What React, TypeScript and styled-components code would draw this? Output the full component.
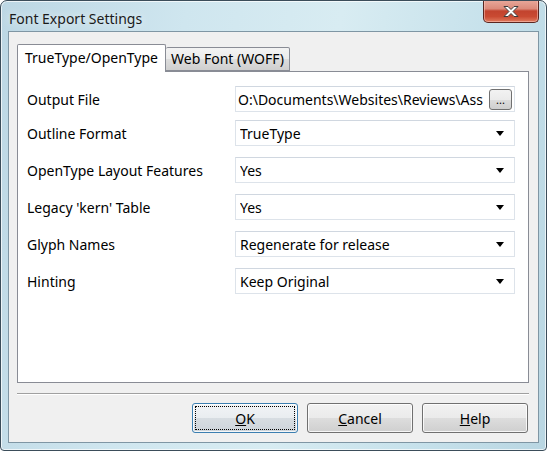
import React from 'react';
import styled, { createGlobalStyle } from 'styled-components';

const GlobalStyle = createGlobalStyle`
  html, body {
    margin: 0;
    padding: 0;
    background: #ffffff;
  }
  body {
    font-family: 'Noto Sans', 'Open Sans', sans-serif;
    font-size: 14px;
    color: #000;
  }
`;

interface Row {
  label: string;
  value: string;
  browse?: boolean;
}

const rows: Row[] = [
  { label: 'Output File', value: 'O:\\Documents\\Websites\\Reviews\\Ass', browse: true },
  { label: 'Outline Format', value: 'TrueType' },
  { label: 'OpenType Layout Features', value: 'Yes' },
  { label: "Legacy 'kern' Table", value: 'Yes' },
  { label: 'Glyph Names', value: 'Regenerate for release' },
  { label: 'Hinting', value: 'Keep Original' },
];

const App: React.FC = () => {
  return (
    <>
      <GlobalStyle />
      <Window>
        <TitleBar>
          <Title>Font Export Settings</Title>
          <CloseButton aria-label="Close">
            <svg width="20" height="13" viewBox="0 0 20 13">
              <path
                d="M3 1.5h4l3 3 3-3h4l-5 5 5 5h-4l-3-3-3 3H3l5-5z"
                fill="#ffffff"
                stroke="#3d3d3d"
                strokeWidth="1"
                strokeLinejoin="round"
              />
            </svg>
          </CloseButton>
        </TitleBar>
        <Client>
          <Tabs>
            <TabStrip>
              <Tab $active>TrueType/OpenType</Tab>
              <Tab>Web Font (WOFF)</Tab>
            </TabStrip>
            <Panel>
              {rows.map((row, i) => (
                <FieldRow key={row.label} $tight={i === 0}>
                  <Label>{row.label}</Label>
                  {row.browse ? (
                    <TextBox>
                      <FieldText>{row.value}</FieldText>
                      <BrowseButton>...</BrowseButton>
                    </TextBox>
                  ) : (
                    <Combo>
                      <FieldText>{row.value}</FieldText>
                      <Arrow />
                    </Combo>
                  )}
                </FieldRow>
              ))}
            </Panel>
          </Tabs>
          <Separator />
          <ButtonBar>
            <Button $default>
              <u>O</u>K
            </Button>
            <Button>
              <u>C</u>ancel
            </Button>
            <Button>
              <u>H</u>elp
            </Button>
          </ButtonBar>
        </Client>
      </Window>
    </>
  );
};

export default App;

const Window = styled.div`
  width: 547px;
  height: 451px;
  box-sizing: border-box;
  border: 1px solid #3b4d5a;
  border-radius: 7px 7px 4px 4px;
  background: linear-gradient(100deg, #bcd7e4 0%, #cfe6ef 30%, #d8ecf2 55%, #c6e1eb 80%, #b9d6e2 100%);
  box-shadow: inset 0 0 0 1px rgba(255, 255, 255, 0.7);
  padding: 0 7px 7px 7px;
  display: flex;
  flex-direction: column;
  overflow: hidden;
`;

const TitleBar = styled.div`
  height: 30px;
  display: flex;
  align-items: flex-start;
  justify-content: space-between;
`;

const Title = styled.div`
  font-size: 14px;
  color: #1a1a1a;
  padding: 8px 0 0 1px;
  text-shadow: 0 0 8px rgba(255, 255, 255, 0.9);
`;

const CloseButton = styled.div`
  width: 56px;
  height: 23px;
  margin-top: -1px;
  box-sizing: border-box;
  border: 1px solid #5a2620;
  border-top: none;
  border-radius: 0 0 5px 5px;
  background: linear-gradient(
    to bottom,
    #e9a99c 0%,
    #dc8a7a 40%,
    #c2432e 50%,
    #c94a32 75%,
    #e07b5e 100%
  );
  box-shadow: inset 0 0 0 1px rgba(255, 210, 200, 0.5);
  display: flex;
  align-items: center;
  justify-content: center;
`;

const Client = styled.div`
  flex: 1;
  box-sizing: border-box;
  border: 1px solid #7f96a4;
  background: #f0f0f0;
  padding: 12px 9px 0 8px;
  display: flex;
  flex-direction: column;
`;

const Tabs = styled.div`
  display: flex;
  flex-direction: column;
`;

const TabStrip = styled.div`
  display: flex;
  align-items: flex-end;
  height: 27px;
  position: relative;
  z-index: 1;
`;

const Tab = styled.div<{ $active?: boolean }>`
  box-sizing: border-box;
  height: ${(p) => (p.$active ? '28px' : '24px')};
  margin-bottom: ${(p) => (p.$active ? '-1px' : '0')};
  padding: ${(p) => (p.$active ? '3px 7px 0 7px' : '1px 5px 0 5px')};
  border: 1px solid #898c95;
  border-bottom: ${(p) => (p.$active ? 'none' : '1px solid #898c95')};
  border-left: ${(p) => (p.$active ? '1px solid #898c95' : 'none')};
  border-radius: 2px 2px 0 0;
  background: ${(p) => (p.$active ? '#ffffff' : 'linear-gradient(to bottom, #f3f3f3 0%, #ebebeb 50%, #dddddd 51%, #cfcfcf 100%)')};
  white-space: nowrap;
`;

const Panel = styled.div`
  height: 312px;
  box-sizing: border-box;
  border: 1px solid #898c95;
  background: #ffffff;
  padding: 14px 13px 0 9px;
  display: flex;
  flex-direction: column;
  gap: 11px;
`;

const FieldRow = styled.div<{ $tight?: boolean }>`
  display: grid;
  grid-template-columns: 208px 1fr;
  align-items: center;
  height: 26px;
  margin-bottom: ${(p) => (p.$tight ? '-3px' : '0')};
`;

const Label = styled.div`
  white-space: nowrap;
`;

const TextBox = styled.div`
  height: 26px;
  box-sizing: border-box;
  border: 1px solid #dde3ea;
  border-top-color: #d0d7e0;
  background: #ffffff;
  display: flex;
  align-items: center;
  gap: 2px;
  padding: 0 2px 0 2px;
  overflow: hidden;
`;

const Combo = styled(TextBox)`
  padding-left: 4px;
  padding-right: 10px;
  justify-content: space-between;
`;

const FieldText = styled.span`
  white-space: nowrap;
  overflow: hidden;
  flex: 1;
  min-width: 0;
`;

const BrowseButton = styled.div`
  flex: none;
  width: 23px;
  height: 21px;
  box-sizing: border-box;
  border: 1px solid #707070;
  border-radius: 3px;
  background: linear-gradient(to bottom, #f2f2f2 0%, #ebebeb 50%, #dddddd 51%, #cfcfcf 100%);
  font-size: 11px;
  line-height: 20px;
  text-align: center;
`;

const Arrow = styled.span`
  flex: none;
  width: 0;
  height: 0;
  border-left: 4px solid transparent;
  border-right: 4px solid transparent;
  border-top: 5px solid #000;
`;

const Separator = styled.div`
  height: 0;
  margin-top: 10px;
  border-top: 1px solid #a0a0a0;
  border-bottom: 1px solid #ffffff;
`;

const ButtonBar = styled.div`
  display: flex;
  justify-content: flex-end;
  gap: 9px;
  margin: 8px 1px 0 0;
`;

const Button = styled.div<{ $default?: boolean }>`
  width: 106px;
  height: 30px;
  box-sizing: border-box;
  border: 1px solid ${(p) => (p.$default ? '#3c7fb1' : '#707070')};
  border-radius: 3px;
  background: ${(p) =>
    p.$default
      ? 'linear-gradient(to bottom, #f1f4f6 0%, #e9edf0 50%, #d7dde2 51%, #cdd4da 100%)'
      : 'linear-gradient(to bottom, #f2f2f2 0%, #ebebeb 50%, #dddddd 51%, #cfcfcf 100%)'};
  box-shadow: inset 0 0 0 1px rgba(255, 255, 255, 0.8);
  outline: ${(p) => (p.$default ? '1px dotted #000' : 'none')};
  outline-offset: -4px;
  display: flex;
  align-items: center;
  justify-content: center;
  color: #000;
`;
